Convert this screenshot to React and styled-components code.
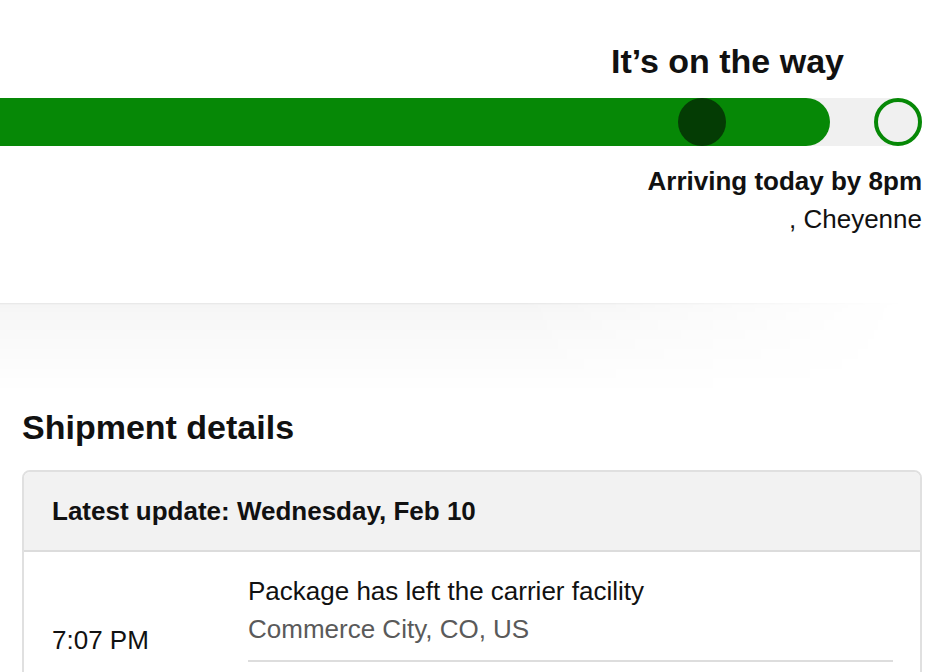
import React from "react";
import styled, { createGlobalStyle } from "styled-components";

const GlobalStyle = createGlobalStyle`
  body {
    margin: 0;
    background: #fff;
    font-family: "Liberation Sans", Arial, Helvetica, sans-serif;
    color: #111;
  }
`;

const Page = styled.div`
  width: 944px;
  height: 672px;
  overflow: hidden;
`;

const StatusCard = styled.section`
  position: relative;
  padding: 41px 22px 65px 0;
  text-align: right;
  background: #fff;

  &::after {
    content: "";
    position: absolute;
    left: 0;
    right: 0;
    top: 100%;
    height: 90px;
    background: linear-gradient(
      rgba(0, 0, 0, 0.1) 0,
      rgba(0, 0, 0, 0.04) 2px,
      rgba(0, 0, 0, 0.03) 12px,
      rgba(0, 0, 0, 0) 100%
    );
    -webkit-mask-image: linear-gradient(to right, #000 55%, transparent 96%);
    mask-image: linear-gradient(to right, #000 55%, transparent 96%);
    pointer-events: none;
  }
`;

const StatusTitle = styled.h1`
  margin: 0 78px 0 0;
  font-size: 34px;
  line-height: 40px;
  font-weight: 700;
`;

const Track = styled.div`
  position: relative;
  margin-top: 17px;
  height: 48px;
  background: #f0f0f0;
  border-radius: 0 24px 24px 0;
`;

const Fill = styled.div`
  height: 100%;
  background: #068806;
  border-radius: 0 24px 24px 0;
`;

const Marker = styled.span`
  position: absolute;
  top: 0;
  width: 48px;
  height: 48px;
  box-sizing: border-box;
  border-radius: 50%;
  background: ${({ $done }) => ($done ? "#043c04" : "#f0f0f0")};
  border: ${({ $done }) => ($done ? "none" : "4px solid #068806")};
`;

const Eta = styled.div`
  margin-top: 16px;
  font-size: 26px;
  line-height: 38px;
`;

const EtaStrong = styled.div`
  font-weight: 700;
`;

const Main = styled.main`
  padding: 104px 22px 0;
`;

const SectionTitle = styled.h2`
  margin: 0 0 23px;
  font-size: 34px;
  line-height: 40px;
  font-weight: 700;
`;

const DetailsCard = styled.div`
  border: 2px solid #e0e0e0;
  border-radius: 8px;
  overflow: hidden;
  font-size: 26px;
  line-height: 38px;
`;

const CardHeader = styled.div`
  padding: 20px 28px;
  background: #f2f2f2;
  border-bottom: 2px solid #dcdcdc;
  font-weight: 700;
`;

const EventRow = styled.div`
  display: grid;
  grid-template-columns: 196px 1fr;
  min-height: 176px;
  padding: 0 27px 0 28px;
`;

const EventTime = styled.div`
  align-self: center;
`;

const EventBody = styled.div`
  align-self: start;
  padding: 20px 0 12px;
  border-bottom: 2px solid #dddddd;
`;

const EventPlace = styled.div`
  color: #5a5a5a;
`;

const progress = 830 / 922;

export default function App() {
  return (
    <Page>
      <GlobalStyle />
      <StatusCard>
        <StatusTitle>It’s on the way</StatusTitle>
        <Track>
          <Fill style={{ width: `${progress * 100}%` }} />
          <Marker $done style={{ left: 678 }} />
          <Marker style={{ right: 0 }} />
        </Track>
        <Eta>
          <EtaStrong>Arriving today by 8pm</EtaStrong>
          <div>, Cheyenne</div>
        </Eta>
      </StatusCard>

      <Main>
        <SectionTitle>Shipment details</SectionTitle>
        <DetailsCard>
          <CardHeader>Latest update: Wednesday, Feb 10</CardHeader>
          <EventRow>
            <EventTime>7:07 PM</EventTime>
            <EventBody>
              <div>Package has left the carrier facility</div>
              <EventPlace>Commerce City, CO, US</EventPlace>
            </EventBody>
          </EventRow>
        </DetailsCard>
      </Main>
    </Page>
  );
}
